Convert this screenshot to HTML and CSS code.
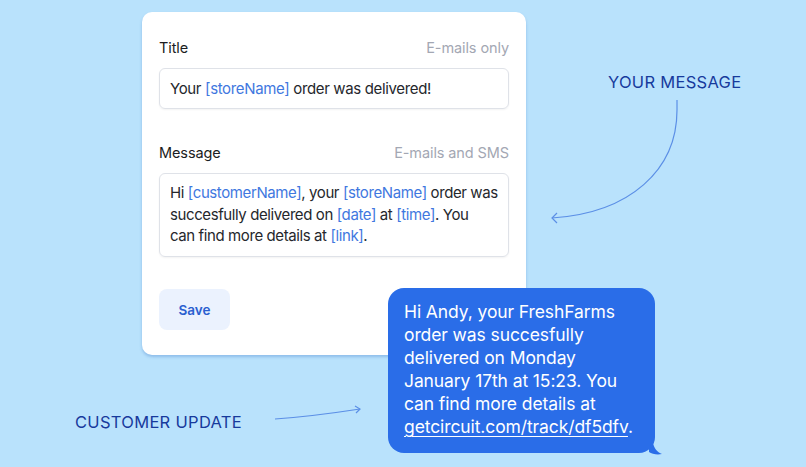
FILE: index.html
```html
<!DOCTYPE html>
<html>
<head>
<meta charset="utf-8">
<link rel="stylesheet" href="styles.css">
</head>
<body>
<div class="canvas">
  <div class="card">
    <div class="field-head">
      <span class="label">Title</span>
      <span class="hint">E-mails only</span>
    </div>
    <div class="input">Your <span class="var">[storeName]</span> order was delivered!</div>

    <div class="field-head msg-head">
      <span class="label">Message</span>
      <span class="hint">E-mails and SMS</span>
    </div>
    <div class="textarea">Hi <span class="var">[customerName]</span>, your <span class="var">[storeName]</span> order was<br>succesfully delivered on <span class="var">[date]</span> at <span class="var">[time]</span>. You<br>can find more details at <span class="var">[link]</span>.</div>

    <button class="save">Save</button>
  </div>

  <div class="bubble">
    Hi Andy, your FreshFarms order was succesfully delivered on Monday January 17th at 15:23. You can find more details at <span class="link">getcircuit.com/track/df5dfv</span>.
    <svg class="tail" width="14" height="12" viewBox="0 0 14 12"><path d="M0 0 L4 0 C5 5 8 9 13 11 C8 12 3 11 0 9 Z" fill="#2a6de8"/></svg>
  </div>

  <div class="tag tag-msg">YOUR MESSAGE</div>
  <div class="tag tag-cust">CUSTOMER UPDATE</div>

  <svg class="arrow arrow-msg" width="140" height="130" viewBox="0 0 140 130">
    <path d="M127 0 L127 10 C127 70 80 113 2 118" fill="none" stroke="#5b8fe6" stroke-width="1.2"/>
    <path d="M7 113 L2 118 L7 123" fill="none" stroke="#5b8fe6" stroke-width="1.2"/>
  </svg>
  <svg class="arrow arrow-cust" width="92" height="20" viewBox="0 0 92 20">
    <path d="M1 16 C30 14 60 10 86 6" fill="none" stroke="#5b8fe6" stroke-width="1.2"/>
    <path d="M81 3 L86 6 L82 10" fill="none" stroke="#5b8fe6" stroke-width="1.2"/>
  </svg>
</div>
</body>
</html>
```

FILE: styles.css
```css
* { box-sizing: border-box; }
html, body { margin: 0; padding: 0; }
body {
  background: #b9e2fc;
  font-family: Inter, "Noto Sans", sans-serif;
  width: 806px;
  height: 467px;
  overflow: hidden;
}
.canvas {
  position: relative;
  width: 806px;
  height: 467px;
}
.card {
  position: absolute;
  left: 142px;
  top: 12px;
  width: 384px;
  height: 343px;
  background: #fff;
  border-radius: 10px;
  padding: 26px 17px 0 17px;
  box-shadow: 0 2px 3px rgba(60, 120, 200, 0.35);
  display: flex;
  flex-direction: column;
}
.field-head {
  display: flex;
  justify-content: space-between;
  align-items: center;
  height: 20px;
  line-height: 20px;
}
.msg-head { margin-top: 34px; }
.label {
  font-size: 14.5px;
  color: #1b1d22;
  letter-spacing: -0.1px;
}
.hint {
  font-size: 14.5px;
  color: #a3a7b3;
  letter-spacing: -0.1px;
}
.input {
  margin-top: 10px;
  height: 41px;
  border: 1px solid #dfe2e8;
  border-radius: 6px;
  padding: 0 10px;
  line-height: 39px;
  font-size: 15px;
  letter-spacing: -0.35px;
  color: #25272c;
  box-shadow: 0 1px 2px rgba(0,0,0,0.05);
}
.textarea {
  margin-top: 10px;
  height: 84px;
  border: 1px solid #dfe2e8;
  border-radius: 6px;
  padding: 8px 4px 8px 10px;
  line-height: 21.5px;
  font-size: 15px;
  letter-spacing: -0.4px;
  color: #25272c;
  box-shadow: 0 1px 2px rgba(0,0,0,0.05);
}
.var { color: #3f78e0; }
.save {
  margin-top: 32px;
  width: 71px;
  height: 41px;
  border: none;
  border-radius: 8px;
  background: #ebf2fe;
  color: #2a5fd0;
  font-family: Inter, "Noto Sans", sans-serif;
  font-weight: 600;
  font-size: 13.5px;
  padding: 0;
}
.bubble {
  position: absolute;
  left: 388px;
  top: 288px;
  width: 267px;
  height: 165px;
  background: #2a6de8;
  border-radius: 16px;
  padding: 12px 10px 0 16px;
  color: #fff;
  font-size: 17.5px;
  letter-spacing: -0.1px;
  line-height: 23px;
}
.link { text-decoration: underline; text-underline-offset: 3px; text-decoration-thickness: 1px; }
.tail {
  position: absolute;
  right: -8px;
  bottom: -2px;
}
.tag {
  position: absolute;
  color: #173a9c;
  font-size: 16.5px;
  letter-spacing: 0.3px;
  line-height: 20px;
}
.tag-msg { left: 608px; top: 72px; }
.tag-cust { left: 75px; top: 412px; }
.arrow { position: absolute; }
.arrow-msg { left: 550px; top: 100px; }
.arrow-cust { left: 274px; top: 403px; }
```
